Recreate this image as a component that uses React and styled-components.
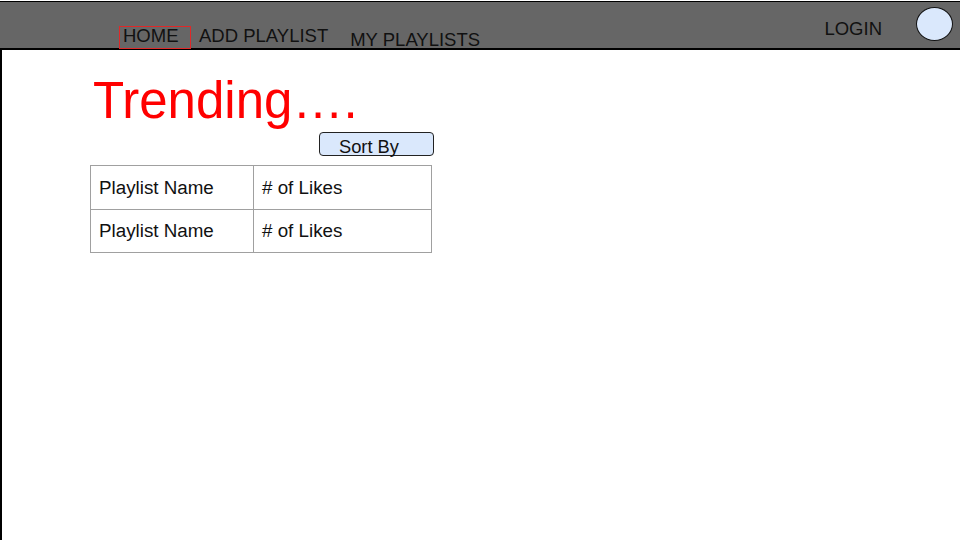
import React from "react";
import styled, { createGlobalStyle } from "styled-components";

const Global = createGlobalStyle`
  html, body { margin: 0; padding: 0; background: #fff; }
  body { font-family: "Liberation Sans", Arial, sans-serif; }
  * { box-sizing: border-box; }
`;

const Page = styled.div`
  width: 960px;
  height: 540px;
  display: flex;
  flex-direction: column;
  overflow: hidden;
`;

const Header = styled.header`
  margin-top: 1px;
  height: 49px;
  flex-shrink: 0;
  background: #666666;
  border-top: 1px solid #000;
  border-bottom: 2px solid #000;
  display: flex;
  align-items: flex-start;
  font-size: 18.5px;
  line-height: 18px;
  color: #111;
`;

const NavItem = styled.div`
  flex-shrink: 0;
  margin-top: ${(p) => p.$top}px;
  margin-left: ${(p) => p.$left || 0}px;
  white-space: nowrap;
`;

const ActiveNav = styled.div`
  flex-shrink: 0;
  margin-top: 24px;
  margin-left: 119px;
  width: 72px;
  height: 23px;
  border: 1px solid #e02828;
  padding-left: 3px;
  position: relative;
  z-index: 1;
`;

const Login = styled.div`
  margin-left: auto;
  margin-right: 34px;
  margin-top: 18px;
`;

const Avatar = styled.div`
  flex-shrink: 0;
  margin-top: 5px;
  margin-right: 7px;
  width: 37px;
  height: 34px;
  border-radius: 50%;
  background: #dae8fc;
  border: 1px solid #111;
`;

const Main = styled.main`
  flex: 1;
  border-left: 2px solid #000;
  padding-left: 88px;
`;

const Column = styled.div`
  width: 344px;
  display: flex;
  flex-direction: column;
`;

const Title = styled.h1`
  margin: 25px 0 0 3px;
  font-size: 51px;
  line-height: 51px;
  font-weight: 400;
  color: #ff0000;
  white-space: nowrap;
`;

const SortButton = styled.button`
  align-self: flex-end;
  margin-top: 6px;
  width: 115px;
  height: 24px;
  padding: 5px 0 0 19px;
  text-align: left;
  background: #dae8fc;
  border: 1px solid #222;
  border-radius: 4px;
  font-family: "Liberation Sans", Arial, sans-serif;
  font-size: 18.3px;
  line-height: 18px;
  color: #111;
  overflow: visible;
  display: block;
`;

const Table = styled.table`
  margin-top: 9px;
  width: 341px;
  border-collapse: collapse;
  table-layout: fixed;
  font-size: 18.8px;
  color: #111;
`;

const Row = styled.tr`
  height: ${(p) => p.$h}px;
`;

const Cell = styled.td`
  border: 1px solid #a0a0a0;
  padding: 0 0 0 ${(p) => p.$pad}px;
  vertical-align: middle;
  white-space: nowrap;
`;

const rows = [
  { name: "Playlist Name", likes: "# of Likes", h: 44 },
  { name: "Playlist Name", likes: "# of Likes", h: 43 },
];

export default function App() {
  return (
    <>
      <Global />
      <Page>
        <Header>
          <ActiveNav>HOME</ActiveNav>
          <NavItem $top={25} $left={8}>ADD PLAYLIST</NavItem>
          <NavItem $top={29} $left={22}>MY PLAYLISTS</NavItem>
          <Login>LOGIN</Login>
          <Avatar />
        </Header>
        <Main>
          <Column>
            <Title>Trending….</Title>
            <SortButton>Sort By</SortButton>
            <Table>
              <colgroup>
                <col style={{ width: "163px" }} />
                <col style={{ width: "178px" }} />
              </colgroup>
              <tbody>
                {rows.map((r, i) => (
                  <Row key={i} $h={r.h}>
                    <Cell $pad={8}>{r.name}</Cell>
                    <Cell $pad={8}>{r.likes}</Cell>
                  </Row>
                ))}
              </tbody>
            </Table>
          </Column>
        </Main>
      </Page>
    </>
  );
}
